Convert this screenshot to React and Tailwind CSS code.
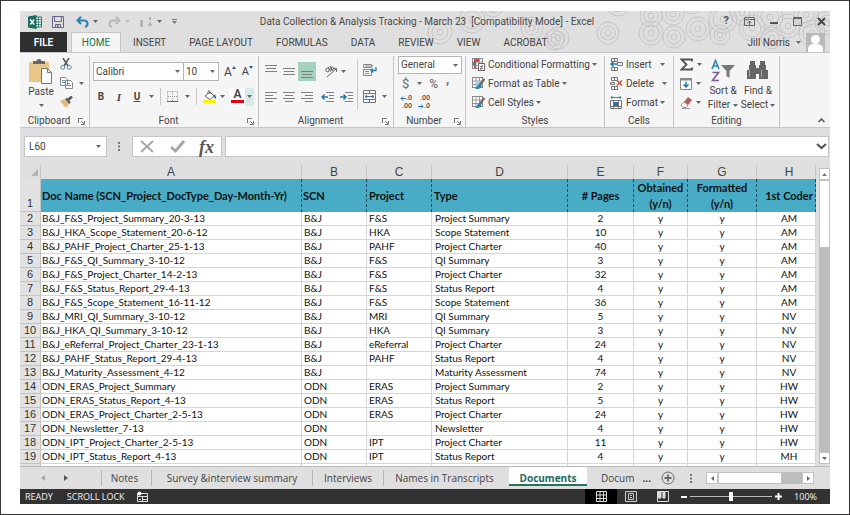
const docs = [
	['B&J_F&S_Project_Summary_20-3-13', 'B&J', 'F&S', 'Project Summary', 2, 'AM'],
	['B&J_HKA_Scope_Statement_20-6-12', 'B&J', 'HKA', 'Scope Statement', 10, 'AM'],
	['B&J_PAHF_Project_Charter_25-1-13', 'B&J', 'PAHF', 'Project Charter', 40, 'AM'],
	['B&J_F&S_QI_Summary_3-10-12', 'B&J', 'F&S', 'QI Summary', 3, 'AM'],
	['B&J_F&S_Project_Charter_14-2-13', 'B&J', 'F&S', 'Project Charter', 32, 'AM'],
	['B&J_F&S_Status_Report_29-4-13', 'B&J', 'F&S', 'Status Report', 4, 'AM'],
	['B&J_F&S_Scope_Statement_16-11-12', 'B&J', 'F&S', 'Scope Statement', 36, 'AM'],
	['B&J_MRI_QI_Summary_3-10-12', 'B&J', 'MRI', 'QI Summary', 5, 'NV'],
	['B&J_HKA_QI_Summary_3-10-12', 'B&J', 'HKA', 'QI Summary', 3, 'NV'],
	['B&J_eReferral_Project_Charter_23-1-13', 'B&J', 'eReferral', 'Project Charter', 24, 'NV'],
	['B&J_PAHF_Status_Report_29-4-13', 'B&J', 'PAHF', 'Status Report', 4, 'NV'],
	['B&J_Maturity_Assessment_4-12', 'B&J', '', 'Maturity Assessment', 74, 'NV'],
	['ODN_ERAS_Project_Summary', 'ODN', 'ERAS', 'Project Summary', 2, 'HW'],
	['ODN_ERAS_Status_Report_4-13', 'ODN', 'ERAS', 'Status Report', 5, 'HW'],
	['ODN_ERAS_Project_Charter_2-5-13', 'ODN', 'ERAS', 'Project Charter', 24, 'HW'],
	['ODN_Newsletter_7-13', 'ODN', '', 'Newsletter', 4, 'HW'],
	['ODN_IPT_Project_Charter_2-5-13', 'ODN', 'IPT', 'Project Charter', 11, 'HW'],
	['ODN_IPT_Status_Report_4-13', 'ODN', 'IPT', 'Status Report', 4, 'MH'],
]

const tabs = ['INSERT', 'PAGE LAYOUT', 'FORMULAS', 'DATA', 'REVIEW', 'VIEW', 'ACROBAT']

// x, y, outer radius
const rings = [
	[20, 21, 12], [52, 9, 13], [73, -3, 9], [112, 17, 11], [134, 29, 10], [138, 27, 11], [188, 22, 11],
	[198, -6, 11], [231, 5, 11], [231, 22, 12], [254, 26, 11], [253, 3, 11], [278, 18, 12], [272, -6, 9],
	[303, 8, 14], [300, 24, 10], [322, 2, 12], [332, 17, 13], [350, 6, 13], [352, 27, 11], [368, 15, 12],
	[386, 4, 12], [392, 22, 13], [407, 12, 12],
]

const Caret = ({ className = '' }) => (
	<svg className={'shrink-0 ' + className} width='5' height='3' viewBox='0 0 5 3' fill='#666'>
		<path d='M0 0h5L2.5 3z' />
	</svg>
)

const Group = ({ label, launcher, className, children }) => (
	<section className={'flex shrink-0 flex-col border-r border-[#c2c2c2] ' + className}>
		<div className='flex h-[60px]'>{children}</div>
		<div className='flex h-[10px] items-center text-[#444]'>
			<h2 className='flex-1 text-center'>{label}</h2>
			{launcher && (
				<button aria-label={label + ' settings'} className='mr-1 shrink-0'>
					<svg width='7' height='7' viewBox='0 0 7 7' fill='none' stroke='#777'>
						<path d='M.5 5V.5H5M3 3l3 3M6.5 3v3.5H3' />
					</svg>
				</button>
			)}
		</div>
	</section>
)

const Lines = ({ rows }) => (
	<svg width='12' height='10' viewBox='0 0 12 10' stroke='#808080'>
		{rows.map(([x, y, w]) => <path key={y} d={`M${x} ${y + 0.5}h${w}`} />)}
	</svg>
)

const IconBtn = ({ label, className = '', children }) => (
	<button aria-label={label} className={'flex shrink-0 items-center justify-center ' + className}>{children}</button>
)

const SheetIcon = ({ kind }) => (
	<svg width='13' height='13' viewBox='0 0 13 13' fill='none'>
		<rect x='.5' y='.5' width='10' height='10' fill='#fff' stroke='#888' />
		<path d='M.5 4h10M.5 7.500h10M4 .5v10M7.500 .5v10' stroke='#999' />
		{kind === 'cond' && (
			<>
				<path d='M2 1h5v3H2zM2 7h2v3H2z' fill='#e0463a' />
				<path d='M1 4h3v3H1z' fill='#4a7fa5' />
				<rect x='6.500' y='5.500' width='6' height='7' fill='#fff' stroke='#666' />
				<path d='M8 8.500h3M8 10.500h3M10.500 7l-2 5' stroke='#555' strokeWidth='.7' />
			</>
		)}
		{kind !== 'cond' && (
			<>
				{kind === 'table' && <path d='M4 4h6v6H4z' fill='#a9d0e3' />}
				<path d='M12.500 2l-5 6' stroke='#666' strokeWidth='2' />
				<path d='M8 7c-3 0-2 3-5 4.500 3 1.500 6.500 0 6.500-3z' fill='#2e84ac' />
			</>
		)}
	</svg>
)

const CellIcon = ({ kind }) => (
	<svg width='13' height='13' viewBox='0 0 13 13' fill='none' stroke='#777'>
		{kind === 'insert' && (
			<>
				<path d='M1.500 .5h6v3h-6zM4.500 .5v3M1.500 9.500h6v3h-6zM4.500 9.500v3M7.500 4.500h5v3h-5z' />
				<path d='M7 6H1M3.500 3.500L1 6l2.500 2.500' stroke='#2277a8' strokeWidth='1.500' />
			</>
		)}
		{kind === 'delete' && (
			<>
				<path d='M1.500 .5h6v3h-6zM4.500 .5v3M1.500 9.500h6v3h-6zM4.500 9.500v3M.5 5.500h4v2h-4z' />
				<path d='M7 3.500l5 5M12 3.500l-5 5' stroke='#c4573a' strokeWidth='1.500' />
			</>
		)}
		{kind === 'format' && (
			<>
				<path d='M1 1.500h10M2.500 0L1 1.500 2.500 3M9.500 0L11 1.500 9.500 3' stroke='#2f86b0' />
				<path d='M.5 4.500h11v8H.5zM3.500 4.500v8M8.500 4.500v8M.5 10.500h11' />
				<path d='M4 6h4v4H4z' fill='#2f6f9c' stroke='none' />
			</>
		)}
	</svg>
)

const MenuItem = ({ icon, text, caret = 'ml-0.5' }) => (
	<button className='flex h-[13px] items-center gap-[3px] whitespace-nowrap'>
		{icon}
		<span className='flex items-center'>{text}<Caret className={caret} /></span>
	</button>
)

const TitleBar = () => (
	<div className='flex h-[21px] items-center text-[#555]'>
		<div className='flex flex-1 items-center pl-2'>
			<svg width='14' height='14' viewBox='0 0 14 14'>
				<path d='M7.500 2h6v10h-6z' fill='#fff' stroke='#1e7265' />
				<path d='M8 4.500h5M8 7h5M8 9.500h5M10.500 2v10' stroke='#1e7265' strokeWidth='.8' />
				<path d='M0 1.500L8.500 0v14L0 12.500z' fill='#1c6b5e' />
				<path d='M2.200 4.500l4 5M6.200 4.500l-4 5' stroke='#fff' strokeWidth='1.400' />
			</svg>
			<IconBtn label='Save' className='ml-2.5'>
				<svg width='12' height='12' viewBox='0 0 12 12' fill='none' stroke='#71628c'>
					<path d='M.5 .5h11v11H.5zM2.500 .5v5h7v-5M3.500 11.500v-3h5v3' />
					<path d='M5 9h1.500v3H5z' fill='#71628c' stroke='none' />
				</svg>
			</IconBtn>
			<IconBtn label='Undo' className='ml-3 gap-1'>
				<svg width='13' height='12' viewBox='0 0 13 12' fill='none' stroke='#2e7fad' strokeWidth='2'>
					<path d='M5 .8L1.500 4.500 5 8M1.500 4.500H8c4.500 0 4.500 5.500 1 6.500' />
				</svg>
				<Caret />
			</IconBtn>
			<IconBtn label='Redo' className='ml-2.5 gap-1 opacity-70'>
				<svg width='13' height='12' viewBox='0 0 13 12' fill='none' stroke='#aaa' strokeWidth='2'>
					<path d='M8 .8L11.500 4.500 8 8M11.500 4.500H5C.5 4.500 .5 10 4 11' />
				</svg>
				<Caret className='opacity-40' />
			</IconBtn>
			<IconBtn label='Sort' className='ml-2.5 gap-1'>
				<svg width='13' height='10' viewBox='0 0 13 10' fill='#b5b5b5'>
					<path d='M0 3h3v7H0zM9 0h2v3H9zM9 5h2v2h2l-3 3-3-3h2z' />
				</svg>
				<Caret />
			</IconBtn>
			<IconBtn label='Customize toolbar' className='ml-2.5'>
				<svg width='5' height='5' viewBox='0 0 5 5' fill='#777'><path d='M0 0h5v1H0zM0 2h5L2.500 5z' /></svg>
			</IconBtn>
		</div>
		<h1 className='whitespace-pre text-[10px] text-[#4a4a4a]'>Data Collection &amp; Analysis Tracking - March 23  [Compatibility Mode] - Excel</h1>
		<div className='flex flex-1 items-center justify-end gap-[15px] pr-1'>
			<IconBtn label='Help' className='font-bold text-[11px]'>?</IconBtn>
			<IconBtn label='Ribbon options'>
				<svg width='11' height='9' viewBox='0 0 11 9' fill='none' stroke='#666'><path d='M.5 .5h10v8H.5zM.5 2.500h10M5.500 8V4M3.500 6l2-2 2 2' /></svg>
			</IconBtn>
			<IconBtn label='Minimize'>
				<svg width='8' height='8' viewBox='0 0 8 8' fill='#555'><path d='M0 4h8v2H0z' /></svg>
			</IconBtn>
			<IconBtn label='Restore'>
				<svg width='9' height='9' viewBox='0 0 9 9' fill='none' stroke='#666'><path d='M.5 1.500h8v7h-8z' /><path d='M0 1h9' strokeWidth='2' /></svg>
			</IconBtn>
			<IconBtn label='Close'>
				<svg width='9' height='9' viewBox='0 0 9 9' stroke='#444' strokeWidth='1.800'><path d='M1 1l7 7M8 1L1 8' /></svg>
			</IconBtn>
		</div>
	</div>
)

const RibbonTabs = () => (
	<nav className='flex h-5 items-stretch text-[10px] text-[#444]'>
		<button className='w-[47px] bg-[#2f2f2f] font-semibold text-white'>FILE</button>
		<button className='ml-1 w-[50px] border border-b-0 border-[#c6c6c6] bg-[#f5f5f5] text-[#217556]'>HOME</button>
		<div className='flex gap-[23px] pl-3'>
			{tabs.map((tab) => <button key={tab}>{tab}</button>)}
		</div>
		<button className='ml-auto flex items-center gap-1.5'>Jill Norris<Caret /></button>
		<svg className='mx-[5px] self-end' width='19' height='19' viewBox='0 0 19 19'>
			<path d='M0 0h19v19H0z' fill='#b9b9b9' />
			<circle cx='9.500' cy='6.500' r='4.500' fill='#fff' />
			<path d='M2 19v-3c0-4 3-5 7.500-5s7.500 1 7.500 5v3z' fill='#fff' />
		</svg>
	</nav>
)

const Ribbon = () => (
	<div className='flex h-[76px] border-y border-[#c6c6c6] bg-[#f5f5f5] pt-[3px] text-[10px] leading-3 text-[#444]'>
		<Group label='Clipboard' launcher className='w-[70px]'>
			<button className='ml-2 flex w-[26px] flex-col items-center pt-[3px]'>
				<svg width='24' height='25' viewBox='0 0 24 25'>
					<path d='M0 3h20v20H0z' fill='#e8c68a' />
					<path d='M4 2h3.500a2.500 2 0 015 0H16v3H4z' fill='#666' />
					<path d='M12.500 9.500h6l4 4v11h-10z' fill='#fff' stroke='#777' />
					<path d='M18.500 9.500v4h4' fill='none' stroke='#777' />
				</svg>
				<span className='mt-0.5'>Paste</span>
				<Caret className='mt-1.5' />
			</button>
			<div className='ml-1.5 flex flex-col items-start gap-[7px] pt-0.5'>
				<IconBtn label='Cut'>
					<svg width='12' height='12' viewBox='0 0 12 12' fill='none'>
						<path d='M3 0l5 8M9 0L4 8' stroke='#555' strokeWidth='1.500' />
						<circle cx='2.800' cy='9.300' r='2' stroke='#5a83a3' /><circle cx='9.200' cy='9.300' r='2' stroke='#5a83a3' />
					</svg>
				</IconBtn>
				<IconBtn label='Copy' className='gap-1.5'>
					<svg width='13' height='12' viewBox='0 0 13 12' fill='#fff' stroke='#888'>
						<path d='M.5 .5h5l2 2v6h-7zM5.500 3.500h5l2 2v6h-7z' />
						<path d='M2 3.500h3M2 5.500h3M7 6.500h3M7 8.500h4' stroke='#6f92aa' />
					</svg>
					<Caret />
				</IconBtn>
				<IconBtn label='Format painter'>
					<svg width='13' height='12' viewBox='0 0 13 12'>
						<path d='M0 5l5-2 4 5-3 4z' fill='#e6b877' />
						<path d='M5 3l2-1.500 4 5L9 8z' fill='#666' /><path d='M8 4l4-3.500' stroke='#555' strokeWidth='2.500' />
					</svg>
				</IconBtn>
			</div>
		</Group>

		<Group label='Font' launcher className='w-[169px]'>
			<div className='flex flex-1 flex-col pl-[3px] pt-1.5'>
				<div className='flex h-[19px] items-center'>
					<div className='flex h-[19px] w-[91px] items-center border border-[#b5b5b5] bg-white pr-[3px]'>
						<select aria-label='Font' className='min-w-0 flex-1 appearance-none pl-0.5'><option>Calibri</option></select>
						<Caret />
					</div>
					<div className='flex h-[19px] w-[35px] items-center border border-l-0 border-[#b5b5b5] bg-white pr-[3px]'>
						<select aria-label='Font size' className='min-w-0 flex-1 appearance-none pl-0.5'><option>10</option></select>
						<Caret />
					</div>
					<IconBtn label='Grow font' className='ml-[5px] text-[12px]'>
						A<svg className='mb-2' width='4' height='3' viewBox='0 0 4 3' fill='#2c5f86'><path d='M2 0l2 3H0z' /></svg>
					</IconBtn>
					<IconBtn label='Shrink font' className='ml-1.5 text-[11px]'>
						A<svg className='mb-2' width='4' height='3' viewBox='0 0 4 3' fill='#2c5f86'><path d='M2 3l2-3H0z' /></svg>
					</IconBtn>
				</div>
				<div className='mt-1.5 flex h-[19px] items-center pl-1'>
					<IconBtn label='Bold' className='w-2 font-bold'>B</IconBtn>
					<IconBtn label='Italic' className="ml-2.5 w-2 font-['Liberation_Serif'] text-[11px] font-bold italic">I</IconBtn>
					<IconBtn label='Underline' className='ml-2.5 w-2 font-bold underline'>U</IconBtn>
					<Caret className='ml-2' />
					<span className='mx-1.5 h-[17px] w-px bg-[#c8c8c8]' />
					<IconBtn label='Borders' className='gap-[7px]'>
						<svg width='11' height='11' viewBox='0 0 11 11' stroke='#999' fill='none'>
							<path d='M.5 .5h10v10M.5 .5v10M5.500 1v9M1 5.500h9' strokeDasharray='1 1' /><path d='M0 10.500h11' stroke='#666' />
						</svg>
						<Caret />
					</IconBtn>
					<span className='mx-1.5 h-[17px] w-px bg-[#c8c8c8]' />
					<IconBtn label='Fill color' className='gap-1'>
						<svg width='13' height='13' viewBox='0 0 13 13'>
							<path d='M0 10h13v3H0z' fill='#fff200' />
							<path d='M2 6l5-4 4 4-4 3.500z' fill='#fff' stroke='#666' />
							<path d='M5 4V1.500Q6 0 7 1.500V4' fill='none' stroke='#666' /><path d='M11 4q3 2 1.500 5-2-1-1.500-5z' fill='#2f74a0' />
						</svg>
						<Caret />
					</IconBtn>
					<IconBtn label='Font color' className='ml-1 h-[18px] bg-white pl-0.5'>
						<span className='flex h-[13px] w-[13px] items-center justify-center border-b-[3px] border-[#e60012] pb-0.5 text-[12px] font-semibold'>A</span>
						<span className='ml-px flex h-[18px] w-[9px] items-center justify-center bg-[#d7ebe8]'><Caret /></span>
					</IconBtn>
				</div>
			</div>
		</Group>

		<Group label='Alignment' launcher className='w-[135px]'>
			<div className='flex flex-col gap-1.5 pl-1.5 pt-1.5'>
				<div className='flex h-[19px] items-center gap-1.5'>
					<IconBtn label='Top align' className='pb-1.5'><Lines rows={[[0, 1, 12], [1, 4, 10], [0, 7, 12]]} /></IconBtn>
					<IconBtn label='Middle align'><Lines rows={[[0, 1, 12], [1, 4, 10], [0, 7, 12]]} /></IconBtn>
					<IconBtn label='Bottom align' className='-mx-[3px] h-[19px] w-[18px] bg-[#a3d1bc] pt-1.5'>
						<Lines rows={[[0, 1, 12], [1, 4, 10], [0, 7, 12]]} />
					</IconBtn>
					<IconBtn label='Orientation' className='ml-1.5 gap-1'>
						<svg width='12' height='13' viewBox='0 0 12 13' fill='none' stroke='#666'>
							<circle cx='2.500' cy='5' r='1.800' /><path d='M3 2l3 5M5 1l3 5' /><circle cx='7' cy='3.500' r='1.500' />
							<path d='M2 12l9-8M8 3.500h3.500V7' />
						</svg>
						<Caret />
					</IconBtn>
				</div>
				<div className='flex h-[19px] items-center gap-1.5'>
					<IconBtn label='Align left'><Lines rows={[[0, 0, 12], [0, 3, 8], [0, 6, 12], [0, 9, 8]]} /></IconBtn>
					<IconBtn label='Center'><Lines rows={[[0, 0, 12], [2, 3, 8], [0, 6, 12], [2, 9, 8]]} /></IconBtn>
					<IconBtn label='Align right'><Lines rows={[[0, 0, 12], [4, 3, 8], [0, 6, 12], [4, 9, 8]]} /></IconBtn>
					<IconBtn label='Decrease indent' className='ml-0.5'>
						<svg width='13' height='10' viewBox='0 0 13 10' fill='none' stroke='#808080'>
							<path d='M5 .5h8M8 3.500h5M8 6.500h5M5 9.500h8' /><path d='M7 5H1M3.500 2.500L1 5l2.500 2.500' stroke='#2277a8' strokeWidth='1.500' />
						</svg>
					</IconBtn>
					<IconBtn label='Increase indent'>
						<svg width='13' height='10' viewBox='0 0 13 10' fill='none' stroke='#808080'>
							<path d='M5 .5h8M8 3.500h5M8 6.500h5M5 9.500h8' /><path d='M0 5h6M3.500 2.500L6 5 3.500 7.500' stroke='#2277a8' strokeWidth='1.500' />
						</svg>
					</IconBtn>
				</div>
			</div>
			<div className='ml-1 mt-1 flex h-[50px] flex-col gap-[13px] border-l border-[#c8c8c8] pl-[5px] pt-1'>
				<IconBtn label='Wrap text' className='self-start'>
					<svg width='14' height='13' viewBox='0 0 14 13' fill='none' stroke='#888'>
						<path d='M.5 .5h8v3h-8zM.5 5.500h8v6h-8zM2 2h8M2 7.500h4M2 9.500h4' />
						<path d='M13 3v3.500H8M10 4.500L8 6.500l2 2' stroke='#2f7fab' strokeWidth='1.300' />
					</svg>
				</IconBtn>
				<IconBtn label='Merge' className='gap-1.5'>
					<svg width='13' height='13' viewBox='0 0 13 13' fill='none' stroke='#777'>
						<path d='M.5 .5h12v12H.5zM.5 3.500h12M.5 9.500h12M6.500 .5v3M6.500 9.500v3' /><path d='M2 6.500h9M4 5L2 6.500 4 8M9 5l2 1.500L9 8' stroke='#456f8c' />
					</svg>
					<Caret />
				</IconBtn>
			</div>
		</Group>

		<Group label='Number' launcher className='w-[72px]'>
			<div className='flex flex-1 flex-col pl-1'>
				<div className='flex h-[18px] w-[64px] items-center border border-[#b5b5b5] bg-white pr-[3px]'>
					<select aria-label='Number format' className='min-w-0 flex-1 appearance-none pl-0.5'><option>General</option></select>
					<Caret />
				</div>
				<div className='flex h-[19px] items-center pl-1 text-[13px] text-[#666]'>
					<IconBtn label='Currency'>$</IconBtn>
					<Caret className='ml-2' />
					<IconBtn label='Percent' className='ml-[7px] text-[12px]'>%</IconBtn>
					<IconBtn label='Comma style' className='ml-2 pb-2 font-bold'>,</IconBtn>
				</div>
				<div className='flex h-[18px] items-center gap-1.5 pl-0.5 text-[7px] font-semibold leading-[8px] text-[#555]'>
					<IconBtn label='Increase decimal' className='flex-col !items-end'>
						<span className='flex items-center'>
							<svg width='6' height='5' viewBox='0 0 6 5' fill='none' stroke='#2277a8'><path d='M6 2.500H1M3 .5l-2 2 2 2' /></svg>.0
						</span>
						<span>.00</span>
					</IconBtn>
					<IconBtn label='Decrease decimal' className='flex-col !items-end'>
						<span>.00</span>
						<span className='flex items-center'>
							<svg width='6' height='5' viewBox='0 0 6 5' fill='none' stroke='#2277a8'><path d='M0 2.500h5M3 .5l2 2-2 2' /></svg>.0
						</span>
					</IconBtn>
				</div>
			</div>
		</Group>

		<Group label='Styles' className='w-[139px]'>
			<div className='flex flex-col gap-1.5 pl-1.5 pt-0.5'>
				<MenuItem icon={<SheetIcon kind='cond' />} text='Conditional Formatting' />
				<MenuItem icon={<SheetIcon kind='table' />} text='Format as Table' />
				<MenuItem icon={<SheetIcon kind='cell' />} text='Cell Styles' />
			</div>
		</Group>

		<Group label='Cells' className='w-[69px]'>
			<div className='flex flex-col gap-1.5 pl-[5px] pt-0.5'>
				<MenuItem icon={<CellIcon kind='insert' />} text='Insert' caret='ml-2' />
				<MenuItem icon={<CellIcon kind='delete' />} text='Delete' caret='ml-2' />
				<MenuItem icon={<CellIcon kind='format' />} text='Format' />
			</div>
		</Group>

		<Group label='Editing' className='w-[106px]'>
			<div className='flex flex-col gap-1.5 pl-1.5 pt-0.5'>
				<MenuItem
					icon={<svg width='13' height='13' viewBox='0 0 13 13' fill='none' stroke='#555' strokeWidth='1.800'><path d='M12 3.500V1.500H1.500l5 5-5 5H12v-2' /></svg>}
					caret='ml-px'
				/>
				<MenuItem
					icon={
						<svg width='12' height='12' viewBox='0 0 12 12' fill='#fff' stroke='#888'>
							<path d='M.5 .5h11v11H.5z' /><path d='M0 1.500h12' strokeWidth='2' /><path d='M6 3.500V9M3.500 6.500L6 9l2.500-2.500' fill='none' stroke='#2277a8' strokeWidth='1.500' />
						</svg>
					}
					caret='ml-px'
				/>
				<MenuItem
					icon={
						<svg width='12' height='12' viewBox='0 0 12 12'>
							<path d='M4 5l4-5 4 3-4 5z' fill='#b0605a' /><path d='M1 8l3-3 4 3-2 2.500H3z' fill='#fff' stroke='#b98b80' /><path d='M2 11.500h8' stroke='#999' />
						</svg>
					}
					caret='ml-px'
				/>
			</div>
			<button className='ml-1.5 flex w-[30px] flex-col items-center pt-[3px] leading-[14px]'>
				<svg className='mb-0.5' width='24' height='23' viewBox='0 0 24 23' fill='none'>
					<path d='M1 10L4.500 1.500 8 10M2.500 7h4' stroke='#2b86b3' strokeWidth='1.600' />
					<path d='M1.500 13.500h6l-6 8h6.500' stroke='#7c5a92' strokeWidth='1.600' />
					<path d='M10 6h14l-5.500 6v7l-3-2v-5z' fill='#777' />
				</svg>
				<span className='whitespace-nowrap'>Sort &amp;</span>
				<span className='flex items-center whitespace-nowrap'>Filter<Caret className='ml-[3px]' /></span>
			</button>
			<button className='ml-1 flex w-[32px] flex-col items-center pt-[3px] leading-[14px]'>
				<svg className='mb-0.5' width='24' height='23' viewBox='0 0 24 23' fill='#666'>
					<path d='M4 2h5v4H4zM14 2h5v4h-5zM3 6h7v5H3zM13 6h7v5h-7zM1 11h9v9H1zM13 11h9v9h-9zM10 9h3v6h-3z' />
					<path d='M3.500 11v7M15.500 11v7' stroke='#aaa' />
				</svg>
				<span className='whitespace-nowrap'>Find &amp;</span>
				<span className='flex items-center whitespace-nowrap'>Select<Caret className='ml-0.5' /></span>
			</button>
		</Group>

		<IconBtn label='Collapse ribbon' className='mb-1 ml-auto mr-[5px] self-end'>
			<svg width='7' height='5' viewBox='0 0 7 5' fill='none' stroke='#555' strokeWidth='1.500'><path d='M.5 4l3-3 3 3' /></svg>
		</IconBtn>
	</div>
)

const FormulaBar = () => (
	<div className='flex items-center pb-2 pl-1 pr-px pt-2 text-[10px] text-[#444]'>
		<div className='flex h-[21px] w-[83px] shrink-0 items-center border border-[#c6c6c6] bg-white pr-[5px]'>
			<input aria-label='Name box' defaultValue='L60' className='min-w-0 flex-1 pl-1' />
			<Caret />
		</div>
		<svg className='mx-[11px] shrink-0' width='3' height='9' viewBox='0 0 3 9' fill='#777'><path d='M0 0h2v2H0zM0 3.500h2v2H0zM0 7h2v2H0z' /></svg>
		<div className='flex h-[21px] w-[90px] shrink-0 items-center border border-[#c6c6c6] bg-white pl-[7px]'>
			<IconBtn label='Cancel'>
				<svg width='14' height='13' viewBox='0 0 14 13' stroke='#a8a8a8' strokeWidth='2'><path d='M1 1l12 11M13 1L1 12' /></svg>
			</IconBtn>
			<IconBtn label='Enter' className='ml-4'>
				<svg width='15' height='13' viewBox='0 0 15 13' fill='none' stroke='#a8a8a8' strokeWidth='3'><path d='M1 7l4.500 4L14 1' /></svg>
			</IconBtn>
			<IconBtn label='Insert function' className="ml-3.5 font-['Liberation_Serif'] text-[18px] font-bold italic leading-4 text-[#555]">fx</IconBtn>
		</div>
		<div className='ml-[3px] flex h-[21px] min-w-0 flex-1 items-center border border-[#c6c6c6] bg-white'>
			<input aria-label='Formula' className='min-w-0 flex-1 px-1' />
			<svg className='mr-px' width='11' height='7' viewBox='0 0 11 7' fill='none' stroke='#555' strokeWidth='2.200'><path d='M1 1l4.500 4L10 1' /></svg>
		</div>
	</div>
)

const th = 'border-r border-dashed border-[#1f4f5c] bg-[#48acc6] py-0 pr-0 text-[#111] font-bold'
const td = 'border-b border-r border-[#d6d6d6] py-0 pr-0 whitespace-nowrap'
const rowNo = "border-b border-r border-[#c2c2c2] bg-[#e2e2e2] p-0 text-center align-bottom font-['Liberation_Sans'] text-[11px] font-normal text-[#333]"

const Sheet = () => (
	<div className='flex'>
		<div className='h-[301px] min-w-0 flex-1 overflow-hidden'>
			<table className="w-full table-fixed border-separate border-spacing-0 bg-white font-['Lato'] text-[10px] leading-[13px] text-[#111]">
				<colgroup>
					<col className='w-[21px]' /><col /><col className='w-[65px]' /><col className='w-[65px]' /><col className='w-[136px]' />
					<col className='w-[66px]' /><col className='w-[54px]' /><col className='w-[69px]' /><col className='w-[59px]' />
				</colgroup>
				<thead>
					<tr className="h-[14px] bg-[#dfdfdf] font-['Liberation_Sans'] text-[12px] text-[#444]">
						<td className='border-r border-[#c6c6c6] p-0'>
							<svg className='ml-auto mr-0.5' width='7' height='7' viewBox='0 0 7 7' fill='#b5b5b5'><path d='M7 0v7H0z' /></svg>
						</td>
						{['A', 'B', 'C', 'D', 'E', 'F', 'G'].map((c) => (
							<th key={c} scope='col' className='border-r border-[#c6c6c6] p-0 font-normal'>{c}</th>
						))}
						<th scope='col' className='border-r border-[#c6c6c6] py-0 pl-1.5 pr-0 font-normal'>H</th>
					</tr>
					<tr className='h-[33px] text-left text-[11px] leading-4'>
						<th scope='row' className={rowNo}>1</th>
						<th className={th + ' pl-px whitespace-nowrap'}>Doc Name (SCN_Project_DocType_Day-Month-Yr)</th>
						<th className={th + ' pl-px'}>SCN</th>
						<th className={th + ' pl-0.5'}>Project</th>
						<th className={th + ' pl-0.5'}>Type</th>
						<th className={th + ' pl-0 text-center'}># Pages</th>
						<th className={th + ' pl-0 text-center'}>Obtained<br />(y/n)</th>
						<th className={th + ' pl-0 text-center'}>Formatted<br />(y/n)</th>
						<th className={th + ' pl-1.5 text-center whitespace-nowrap'}>1st Coder</th>
					</tr>
				</thead>
				<tbody>
					{docs.map(([name, scn, project, type, pages, coder], i) => (
						<tr key={name} className='h-[14px]'>
							<th scope='row' className={rowNo}>{i + 2}</th>
							<td className={td + ' pl-px'}>{name}</td>
							<td className={td + ' pl-0.5'}>{scn}</td>
							<td className={td + ' pl-0.5'}>{project}</td>
							<td className={td + ' pl-[3px]'}>{type}</td>
							<td className={td + ' pl-0 text-center'}>{pages}</td>
							<td className={td + ' pl-0 text-center'}>y</td>
							<td className={td + ' pl-0 text-center'}>y</td>
							<td className={td + ' pl-1.5 text-center'}>{coder}</td>
						</tr>
					))}
					<tr className='h-[14px]'>
						<td className={rowNo} />
						{['A', 'B', 'C', 'D', 'E', 'F', 'G', 'H'].map((c) => <td key={c} className={td} />)}
					</tr>
				</tbody>
			</table>
		</div>
		<div className='ml-[3px] flex w-[11px] shrink-0 flex-col pb-0.5 pt-[3px]'>
			<IconBtn label='Scroll up' className='h-[12px] border border-[#c2c2c2] bg-white'>
				<svg width='5' height='3' viewBox='0 0 5 3' fill='#777'><path d='M2.500 0L5 3H0z' /></svg>
			</IconBtn>
			<div className='flex-1 bg-[#bdbdbd]'><div className='h-[68px] border border-[#c2c2c2] bg-white' /></div>
			<IconBtn label='Scroll down' className='h-[12px] border border-[#c2c2c2] bg-white'><Caret /></IconBtn>
		</div>
	</div>
)

const SheetTabs = () => (
	<div className="flex h-[23px] items-stretch border-t border-[#b9b9b9] font-['Open_Sans'] text-[10px] text-[#444]">
		<div className='flex w-[81px] items-center gap-[19px] pl-[21px]'>
			<IconBtn label='Previous sheet'><svg width='4' height='6' viewBox='0 0 4 6' fill='#aaa'><path d='M4 0v6L0 3z' /></svg></IconBtn>
			<IconBtn label='Next sheet'><svg width='4' height='6' viewBox='0 0 4 6' fill='#555'><path d='M0 0v6l4-3z' /></svg></IconBtn>
		</div>
		<button className='my-[3px] w-[50px] border-l border-[#b5b5b5] pr-1'>Notes</button>
		<button className='my-[3px] w-[161px] border-l border-[#b5b5b5]'>Survey &amp;interview summary</button>
		<button className='my-[3px] w-[71px] border-l border-[#b5b5b5]'>Interviews</button>
		<button className='my-[3px] w-[126px] border-l border-[#b5b5b5] pr-1'>Names in Transcripts</button>
		<button className='mb-[3px] w-[78px] border-b-2 border-[#217560] bg-white pt-1 font-bold text-[#1d6a60]'>Documents</button>
		<button className='pl-3.5 pr-1'>Docum</button>
		<span className='ml-1 self-center font-bold'>...</span>
		<IconBtn label='New sheet' className='ml-2.5'>
			<svg width='14' height='14' viewBox='0 0 14 14' fill='none' stroke='#666'><circle cx='7' cy='7' r='6' /><path d='M7 3.500v7M3.500 7h7' strokeWidth='1.800' /></svg>
		</IconBtn>
		<svg className='ml-auto mr-3.5 self-center' width='2' height='9' viewBox='0 0 2 9' fill='#777'><path d='M0 0h2v2H0zM0 3.500h2v2H0zM0 7h2v2H0z' /></svg>
		<div className='mr-4 flex h-3 w-[108px] self-center'>
			<IconBtn label='Scroll left' className='w-3 border border-[#c2c2c2] bg-white'><svg width='3' height='5' viewBox='0 0 3 5' fill='#666'><path d='M3 0v5L0 2.500z' /></svg></IconBtn>
			<div className='flex-1 bg-[#bdbdbd]'><div className='h-full w-[64px] border border-[#c2c2c2] bg-white' /></div>
			<IconBtn label='Scroll right' className='w-3 border border-[#c2c2c2] bg-white'><svg width='3' height='5' viewBox='0 0 3 5' fill='#666'><path d='M0 0v5l3-2.500z' /></svg></IconBtn>
		</div>
	</div>
)

const StatusBar = () => (
	<footer className="flex h-[15px] items-center bg-[#323232] font-['Open_Sans'] text-[9px] text-[#f2f2f2]">
		<span className='ml-[5px]'>READY</span>
		<span className='ml-3.5'>SCROLL LOCK</span>
		<svg className='ml-3' width='11' height='11' viewBox='0 0 11 11' fill='none' stroke='#ddd'>
			<path d='M.5 2.500h10v8H.5zM.5 5.500h10M5.500 5.500v5M6 8.500h4M2 8.500h2' /><circle cx='2.500' cy='2.500' r='2' fill='#fff' stroke='none' />
		</svg>
		<div className='ml-auto flex items-center'>
			<IconBtn label='Normal view' className='h-[15px] w-8 bg-black'>
				<svg width='11' height='11' viewBox='0 0 11 11' fill='none' stroke='#ddd'><path d='M.5 .5h10v10H.5zM.5 4h10M.5 7.500h10M4 .5v10M7.500 .5v10' /></svg>
			</IconBtn>
			<IconBtn label='Page layout view' className='ml-2'>
				<svg width='12' height='11' viewBox='0 0 12 11' fill='none' stroke='#ccc'><path d='M.5 .5h11v10H.5zM3.500 2.500h5v6h-5zM5 4.500h2M5 6.500h2' /></svg>
			</IconBtn>
			<IconBtn label='Page break view' className='ml-5'>
				<svg width='12' height='11' viewBox='0 0 12 11' fill='none' stroke='#ddd'><path d='M.5 .5h11v10H.5z' /><path d='M1 1h3v6H1zM6 1h2v6H6z' fill='#ddd' /></svg>
			</IconBtn>
			<IconBtn label='Zoom out' className='ml-3'>
				<svg width='6' height='6' viewBox='0 0 6 6' fill='#fff'><path d='M0 2h6v2H0z' /></svg>
			</IconBtn>
			<input
				type='range'
				aria-label='Zoom'
				className='mx-[3px] h-[9px] w-[82px] appearance-none bg-transparent [&::-webkit-slider-runnable-track]:h-px [&::-webkit-slider-runnable-track]:bg-[#bbb] [&::-webkit-slider-thumb]:-mt-1 [&::-webkit-slider-thumb]:h-[9px] [&::-webkit-slider-thumb]:w-1 [&::-webkit-slider-thumb]:appearance-none [&::-webkit-slider-thumb]:bg-white'
			/>
			<IconBtn label='Zoom in'>
				<svg width='7' height='7' viewBox='0 0 7 7' stroke='#fff' strokeWidth='2'><path d='M0 3.500h7M3.500 0v7' /></svg>
			</IconBtn>
			<span className='ml-3 mr-[13px]'>100%</span>
		</div>
	</footer>
)

const App = () => {
	return (
		<div className="w-full border border-[#3a3638] bg-white px-[19px] py-2.5 font-['Roboto',sans-serif]">
			<main className='w-full bg-[#dfdfdf]'>
				<header className='relative'>
					<svg className='absolute right-0 top-0' width='410' height='41' viewBox='0 0 410 41' fill='none' stroke='#c6c6c6'>
						{rings.map(([x, y, r]) => (
							<g key={x + '-' + y}>
								<circle cx={x} cy={y} r={r} /><circle cx={x} cy={y} r={r - 4} /><circle cx={x} cy={y} r='3' />
							</g>
						))}
					</svg>
					<div className='relative'>
						<TitleBar />
						<RibbonTabs />
					</div>
				</header>
				<Ribbon />
				<FormulaBar />
				<Sheet />
				<SheetTabs />
				<StatusBar />
			</main>
		</div>
	)
}

export default App
